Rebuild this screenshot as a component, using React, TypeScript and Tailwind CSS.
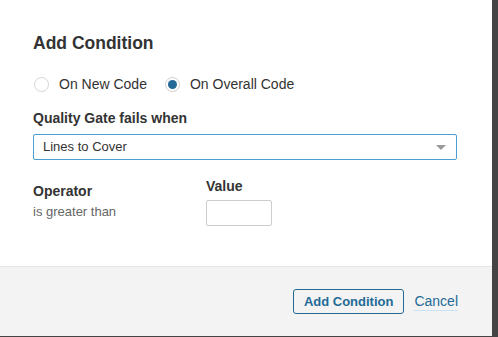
import React from 'react';

const Radio: React.FC<{ checked?: boolean; label: string }> = ({ checked, label }) => (
  <label className="flex items-center gap-[10px]">
    <span
      className={`flex h-[15px] w-[15px] items-center justify-center rounded-full border ${
        checked ? 'border-[#cfcfcf]' : 'border-[#d4d4d4]'
      } bg-white`}
    >
      {checked && <span className="h-[9px] w-[9px] rounded-full bg-[#236a97]" />}
    </span>
    <span className="text-[14px] leading-[20px] text-[#333]">{label}</span>
  </label>
);

export default function App() {
  return (
    <div
      className="flex h-[337px] w-[498px] bg-[#444]"
      style={{ fontFamily: '"Liberation Sans", Arial, sans-serif' }}
    >
      <div className="flex h-[336px] w-[492px] flex-col bg-white">
        <div className="flex-1 px-[33px] pt-[33px]">
          <h2 className="text-[17.5px] font-bold leading-[20px] text-[#333]">Add Condition</h2>

          <div className="mt-[21px] flex items-center gap-[18px] pl-[1px]">
            <Radio label="On New Code" />
            <Radio checked label="On Overall Code" />
          </div>

          <div className="mt-[14px] text-[14px] font-bold leading-[20px] text-[#333]">
            Quality Gate fails when
          </div>
          <div className="mt-[6px] flex h-[26px] w-[424px] items-center justify-between rounded-[2px] border border-[#4b9fd5] pl-[9px] pr-[10px]">
            <span className="text-[13px] text-[#333]">Lines to Cover</span>
            <span className="h-0 w-0 border-x-[5px] border-t-[5px] border-x-transparent border-t-[#999]" />
          </div>

          <div className="mt-[16px] flex">
            <div className="w-[173px] pt-[5px]">
              <div className="text-[14px] font-bold leading-[20px] text-[#333]">Operator</div>
              <div className="mt-[2px] text-[13px] leading-[18px] text-[#666]">is greater than</div>
            </div>
            <div>
              <div className="text-[14px] font-bold leading-[20px] text-[#333]">Value</div>
              <div className="mt-[4px] h-[26px] w-[66px] rounded-[2px] border border-[#cdcdcd] bg-white" />
            </div>
          </div>
        </div>

        <div className="flex h-[70px] items-center justify-end gap-[10px] border-t border-[#e6e6e6] bg-[#f3f3f3] pr-[34px]">
          <button className="h-[25px] rounded-[3px] border border-[#236a97] bg-[#f3f3f3] px-[10px] text-[13px] font-bold text-[#236a97]">
            Add Condition
          </button>
          <a className="border-b border-[#cae3f2] text-[14px] leading-[17px] text-[#236a97]">Cancel</a>
        </div>
      </div>
    </div>
  );
}
